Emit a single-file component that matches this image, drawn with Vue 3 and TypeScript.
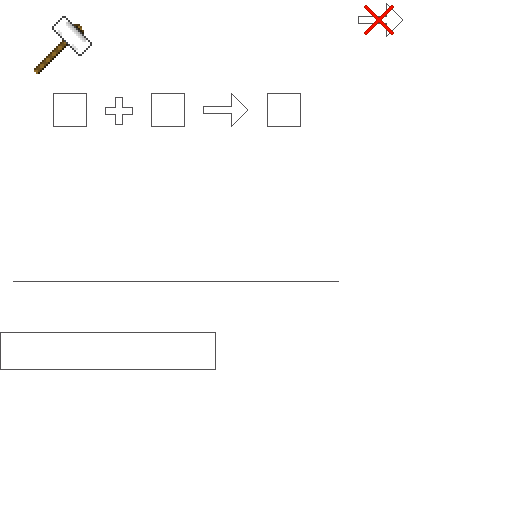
<script setup lang="ts">
interface Cell {
  x: number
  y: number
  fill: string
}

const outline = '#444444'
const wood = ['#896727', '#684e1e', '#493615', '#281e0b']

// The end of the handle that shows above the hammer head.
const handleTip: Cell[] = [
  { x: 20, y: 4, fill: wood[2] },
  { x: 21, y: 4, fill: wood[2] },
  { x: 22, y: 4, fill: wood[2] },
  { x: 21, y: 5, fill: wood[3] },
  { x: 22, y: 5, fill: wood[0] },
  { x: 23, y: 5, fill: wood[1] },
  { x: 22, y: 6, fill: wood[3] },
  { x: 23, y: 6, fill: wood[0] },
  { x: 23, y: 7, fill: wood[3] },
  { x: 24, y: 7, fill: wood[2] },
  { x: 24, y: 8, fill: wood[3] },
]

function handleFill(x: number, y: number): string {
  const sum = x + y
  if (sum === 30) return wood[3]
  if (sum === 26) return wood[2]
  return Math.floor((x - y + 40) / 3) % 2 === 0 ? wood[0] : wood[1]
}

function headFill(x: number, y: number): string {
  const across = x - y
  const along = x + y
  if (across === 15 || across === 3 || along === 14 || along === 42) return outline
  if (along >= 19 && along <= 37) {
    if (across === 14) return '#b8b8b8'
    if (across === 13) return '#cccccc'
    if (across === 12) return '#e0e0e0'
  }
  const lowerShade = (along >= 19 && along <= 22) || (along >= 33 && along <= 37)
  if (lowerShade && across <= 5) return '#dcdcdc'
  return '#ffffff'
}

function buildHammer(): Cell[] {
  const cells: Cell[] = []
  for (let y = 0; y < 29; y++) {
    for (let x = 0; x < 29; x++) {
      const across = x - y
      const along = x + y
      if (across >= 3 && across <= 15 && along >= 14 && along <= 42) {
        cells.push({ x, y, fill: headFill(x, y) })
      } else if (across < 3 && across >= -27 && along >= 26 && along <= 30) {
        cells.push({ x, y, fill: handleFill(x, y) })
      }
    }
  }
  return cells.concat(handleTip)
}

const hammer = buildHammer()
const arrow = 'M28.5 13.5V.5L44.5 16.5V17.5L28.5 33.5V20.5H.5V13.5Z'
const cross = 'M8 4L34 30M34 4L8 30'
</script>

<template>
  <main class="panel">
    <header class="top">
      <svg class="hammer" viewBox="0 0 29 29" aria-hidden="true">
        <rect v-for="(c, i) in hammer" :key="i" :x="c.x" :y="c.y" width="1" height="1" :fill="c.fill" />
      </svg>
      <svg class="blocked" viewBox="0 0 45 34" aria-hidden="true">
        <path class="line" :d="arrow" />
        <path class="cross-edge" :d="cross" />
        <path class="cross" :d="cross" />
      </svg>
    </header>

    <section class="recipe">
      <div class="slot"></div>
      <svg class="plus" viewBox="0 0 28 28" aria-hidden="true">
        <path class="line" d="M10.5 .5H17.5V10.5H27.5V17.5H17.5V27.5H10.5V17.5H.5V10.5H10.5Z" />
      </svg>
      <div class="slot"></div>
      <svg class="arrow" viewBox="0 0 45 34" aria-hidden="true">
        <path class="line" :d="arrow" />
      </svg>
      <div class="slot"></div>
    </section>

    <hr class="divider" />
    <input class="field" type="text" aria-label="Name" />
  </main>
</template>

<style>
body {
  margin: 0;
  background: #ffffff;
}
</style>

<style scoped>
.panel {
  display: flex;
  flex-direction: column;
  align-items: flex-start;
}
svg {
  display: block;
  flex: none;
  shape-rendering: crispEdges;
}
.top {
  display: flex;
  align-items: flex-start;
  gap: 266px;
  padding: 3px 0 0 34px;
}
.hammer {
  width: 58px;
  height: 58px;
  margin-top: 13px;
}
.blocked,
.arrow {
  width: 45px;
  height: 34px;
}
.line {
  fill: none;
  stroke: #545254;
  stroke-width: 1;
}
.cross-edge,
.cross {
  fill: none;
  stroke-linecap: round;
  stroke: #b51a00;
  stroke-width: 4;
}
.cross {
  stroke: #f50f00;
  stroke-width: 2;
}
.recipe {
  display: flex;
  align-items: center;
  gap: 18px;
  padding: 19px 0 0 53px;
}
.slot {
  box-sizing: border-box;
  width: 34px;
  height: 34px;
  border: 1px solid #545254;
}
.plus {
  width: 28px;
  height: 28px;
  margin-top: 2px;
}
.arrow {
  margin-right: 1px;
}
.divider {
  width: 326px;
  height: 1px;
  margin: 154px 0 0 13px;
  border: 0;
  background: #545254;
}
.field {
  box-sizing: border-box;
  width: 216px;
  height: 38px;
  margin: 50px 0 0;
  padding: 0 8px;
  border: 1px solid #545254;
  border-radius: 0;
  outline: 0;
  background: transparent;
  font: 16px "Liberation Sans", sans-serif;
}
</style>
